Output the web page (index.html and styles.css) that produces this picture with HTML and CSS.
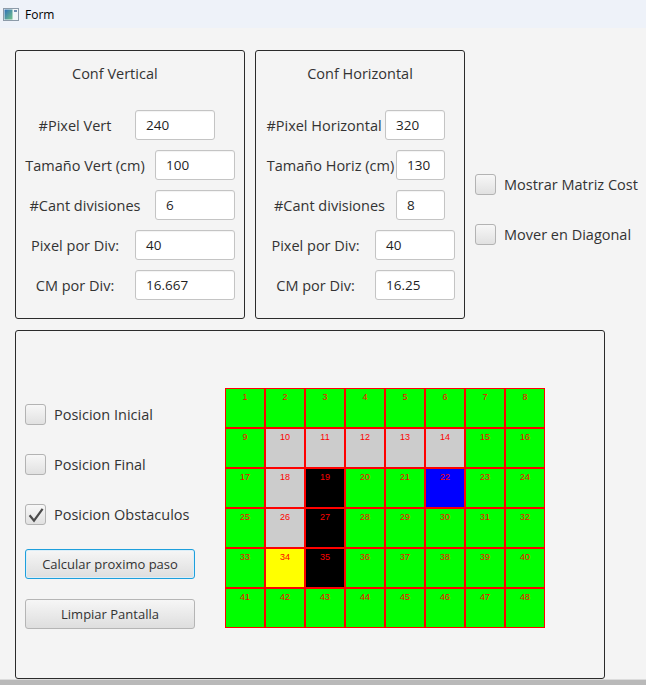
FILE: index.html
```html
<!DOCTYPE html>
<html>
<head>
<meta charset="utf-8">
<title>Form</title>
<link rel="stylesheet" href="styles.css">
</head>
<body>
<div class="titlebar">
  <svg class="appicon" width="16" height="13" viewBox="0 0 16 13">
    <defs>
      <linearGradient id="ig" x1="0" y1="0" x2="1" y2="1">
        <stop offset="0" stop-color="#2f6fb8"/>
        <stop offset="1" stop-color="#74c48a"/>
      </linearGradient>
    </defs>
    <rect x="0.5" y="0.5" width="15" height="12" fill="#f2f5f8" stroke="#8c9aa8"/>
    <rect x="1.5" y="1.5" width="8" height="10" fill="url(#ig)"/>
    <rect x="11" y="2" width="3" height="2" fill="#6f8fb0"/>
  </svg>
  <span class="wtitle">Form</span>
</div>
<div class="main">
  <div class="top">
    <section class="panel p-vert">
      <div class="ptitle t-vert">Conf Vertical</div>
      <div class="rows">
        <div class="row v1"><span class="lbl">#Pixel Vert</span><span class="field">240</span></div>
        <div class="row v2"><span class="lbl">Tamaño Vert (cm)</span><span class="field">100</span></div>
        <div class="row v3"><span class="lbl">#Cant divisiones</span><span class="field">6</span></div>
        <div class="row v4"><span class="lbl">Pixel por Div:</span><span class="field">40</span></div>
        <div class="row v5"><span class="lbl">CM por Div:</span><span class="field">16.667</span></div>
      </div>
    </section>
    <section class="panel p-hor">
      <div class="ptitle t-hor">Conf Horizontal</div>
      <div class="rows">
        <div class="row h1"><span class="lbl">#Pixel Horizontal</span><span class="field">320</span></div>
        <div class="row h2"><span class="lbl">Tamaño Horiz (cm)</span><span class="field">130</span></div>
        <div class="row h3"><span class="lbl">#Cant divisiones</span><span class="field">8</span></div>
        <div class="row h4"><span class="lbl">Pixel por Div:</span><span class="field">40</span></div>
        <div class="row h5"><span class="lbl">CM por Div:</span><span class="field">16.25</span></div>
      </div>
    </section>
    <div class="side">
      <div class="check"><span class="box"></span><span>Mostrar Matriz Cost</span></div>
      <div class="check"><span class="box"></span><span>Mover en Diagonal</span></div>
    </div>
  </div>
  <section class="panel bottom">
    <div class="controls">
      <div class="check"><span class="box"></span><span>Posicion Inicial</span></div>
      <div class="check"><span class="box"></span><span>Posicion Final</span></div>
      <div class="check"><span class="box"><svg width="19" height="19" viewBox="0 0 19 19"><path d="M3.6 10.2 L8 15.6 L16.6 3.8" fill="none" stroke="#4a4a4a" stroke-width="2.2" stroke-linejoin="miter"/></svg></span><span>Posicion Obstaculos</span></div>
      <div class="btn focus">Calcular proximo paso</div>
      <div class="btn">Limpiar Pantalla</div>
    </div>
    <div class="grid">
      <div class="cell">1</div><div class="cell">2</div><div class="cell">3</div><div class="cell">4</div><div class="cell">5</div><div class="cell">6</div><div class="cell">7</div><div class="cell">8</div>
      <div class="cell">9</div><div class="cell gray">10</div><div class="cell gray">11</div><div class="cell gray">12</div><div class="cell gray">13</div><div class="cell gray">14</div><div class="cell">15</div><div class="cell">16</div>
      <div class="cell">17</div><div class="cell gray">18</div><div class="cell black">19</div><div class="cell">20</div><div class="cell">21</div><div class="cell blue">22</div><div class="cell">23</div><div class="cell">24</div>
      <div class="cell">25</div><div class="cell gray">26</div><div class="cell black">27</div><div class="cell">28</div><div class="cell">29</div><div class="cell">30</div><div class="cell">31</div><div class="cell">32</div>
      <div class="cell">33</div><div class="cell yellow">34</div><div class="cell black">35</div><div class="cell">36</div><div class="cell">37</div><div class="cell">38</div><div class="cell">39</div><div class="cell">40</div>
      <div class="cell">41</div><div class="cell">42</div><div class="cell">43</div><div class="cell">44</div><div class="cell">45</div><div class="cell">46</div><div class="cell">47</div><div class="cell">48</div>
    </div>
  </section>
</div>
<div class="strip"></div>
</body>
</html>
```
FILE: styles.css
```css
html, body {
  margin: 0;
  padding: 0;
}
body {
  width: 646px;
  height: 685px;
  overflow: hidden;
  background: #f4f4f4;
  font-family: "Open Sans", "Noto Sans", sans-serif;
  font-size: 14.5px;
  color: #333;
}
.titlebar {
  height: 28px;
  background: #eef2f9;
  display: flex;
  align-items: center;
  padding-left: 3px;
  gap: 6px;
  box-sizing: border-box;
}
.appicon {
  display: block;
}
.wtitle {
  font-family: "Open Sans", "Noto Sans", sans-serif;
  font-size: 12px;
  color: #000;
}
.main {
  height: 651px;
  box-sizing: border-box;
  padding: 22px 0 0 15px;
}
.top {
  display: flex;
  align-items: flex-start;
  gap: 10px;
}
.panel {
  border: 1px solid #2b2b2b;
  border-radius: 3px;
  box-sizing: border-box;
}
.p-vert {
  width: 230px;
  height: 269px;
}
.p-hor {
  width: 210px;
  height: 269px;
}
.ptitle {
  margin-top: 13px;
  height: 20px;
  line-height: 20px;
  white-space: nowrap;
}
.t-vert {
  padding-left: 56px;
}
.t-hor {
  text-align: center;
}
.rows {
  margin-top: 26px;
  display: flex;
  flex-direction: column;
  gap: 10px;
}
.row {
  display: grid;
  height: 30px;
  align-items: center;
  column-gap: 1px;
}
.lbl {
  white-space: nowrap;
  display: flex;
  justify-content: center;
}
.field {
  height: 30px;
  box-sizing: border-box;
  border: 1px solid #c4c4c4;
  border-radius: 3px;
  background: #fff;
  padding-left: 10px;
  line-height: 28px;
  font-size: 13.5px;
  color: #1f1f1f;
  box-shadow: inset 0 1px 1px rgba(0, 0, 0, 0.05);
  white-space: nowrap;
}
.v1 { grid-template-columns: 118px 80px; }
.v2, .v3 { grid-template-columns: 138px 80px; }
.v4, .v5 { grid-template-columns: 118px 100px; }
.h1 { padding-left: 8px; grid-template-columns: 120px 60px; }
.h2 { padding-left: 10px; grid-template-columns: 129px 49px; }
.h3 { padding-left: 8px; grid-template-columns: 131px 49px; }
.h4, .h5 { padding-left: 1px; grid-template-columns: 117px 80px; }

.side {
  padding-top: 124px;
  display: flex;
  flex-direction: column;
  gap: 29px;
}
.check {
  display: flex;
  align-items: center;
  gap: 8px;
  height: 21px;
  white-space: nowrap;
}
.box {
  width: 21px;
  height: 21px;
  flex: none;
  box-sizing: border-box;
  border: 1px solid #b3b3b3;
  border-radius: 3px;
  background: linear-gradient(#f7f7f7, #e1e1e1);
  display: flex;
  align-items: center;
  justify-content: center;
}
.box svg {
  display: block;
}

.bottom {
  margin-top: 11px;
  width: 590px;
  height: 349px;
  display: flex;
  align-items: flex-start;
}
.controls {
  margin-left: 9px;
  margin-top: 73px;
  width: 170px;
  display: flex;
  flex-direction: column;
  gap: 29px;
}
.btn {
  height: 30px;
  box-sizing: border-box;
  border: 1px solid #b5b5b5;
  border-radius: 3px;
  background: linear-gradient(#f6f6f6, #dedede);
  text-align: center;
  line-height: 28px;
  font-size: 13px;
  white-space: nowrap;
}
.check + .btn {
  margin-top: -5px;
}
.btn + .btn {
  margin-top: -9px;
}
.btn.focus {
  border-color: #1d9fdc;
  box-shadow: inset 0 0 0 1px #dbeef8;
}
.grid {
  margin-left: 30px;
  margin-top: 57px;
  display: grid;
  grid-template-columns: repeat(8, 40px);
  grid-auto-rows: 40px;
}
.cell {
  box-sizing: border-box;
  border: 1px solid #ff0000;
  background: #00ff00;
  color: #ff0000;
  font-family: "Liberation Sans", Arial, sans-serif;
  font-size: 9px;
  line-height: 10px;
  padding-top: 3px;
  text-align: center;
}
.cell.gray { background: #cccccc; }
.cell.black { background: #000000; }
.cell.blue { background: #0000ff; }
.cell.yellow { background: #ffff00; }

.strip {
  height: 6px;
  box-sizing: border-box;
  border-top: 1px solid #dcdcdc;
  background: #b9b9b9;
}
```
